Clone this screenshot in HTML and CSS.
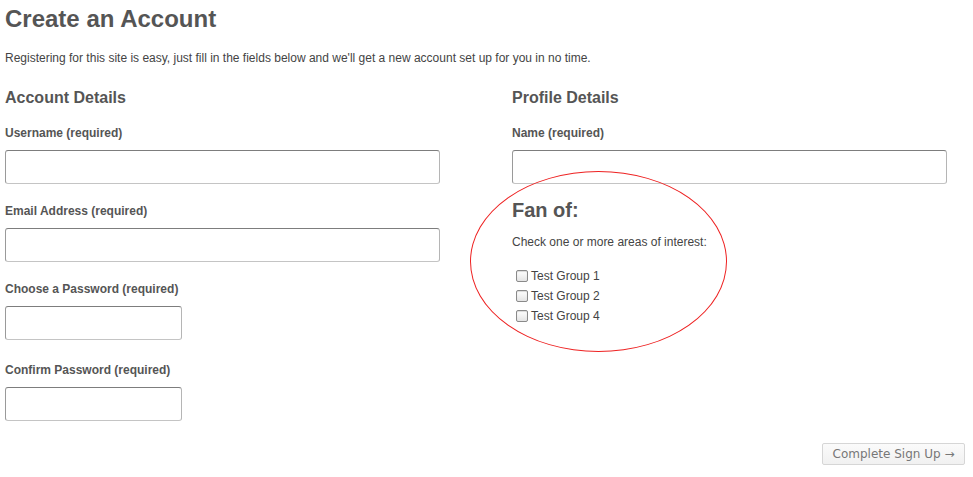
FILE: index.html
```html
<!DOCTYPE html>
<html>
<head>
<meta charset="utf-8">
<link rel="stylesheet" href="styles.css">
</head>
<body>
<div class="page">
  <h1 class="title">Create an Account</h1>
  <p class="intro">Registering for this site is easy, just fill in the fields below and we'll get a new account set up for you in no time.</p>
  <div class="columns">
    <section class="col">
      <h2 class="section-title">Account Details</h2>
      <div class="field">
        <label class="label">Username (required)</label>
        <input class="input wide" type="text">
      </div>
      <div class="field">
        <label class="label">Email Address (required)</label>
        <input class="input wide" type="text">
      </div>
      <div class="field">
        <label class="label">Choose a Password (required)</label>
        <input class="input short" type="password">
      </div>
      <div class="field field-loose">
        <label class="label">Confirm Password (required)</label>
        <input class="input short" type="password">
      </div>
    </section>
    <section class="col col-right">
      <h2 class="section-title">Profile Details</h2>
      <div class="field">
        <label class="label">Name (required)</label>
        <input class="input wide" type="text">
      </div>
      <h3 class="fan-title">Fan of:</h3>
      <p class="fan-help">Check one or more areas of interest:</p>
      <ul class="groups">
        <li class="group"><input class="check" type="checkbox"><span>Test Group 1</span></li>
        <li class="group"><input class="check" type="checkbox"><span>Test Group 2</span></li>
        <li class="group"><input class="check" type="checkbox"><span>Test Group 4</span></li>
      </ul>
      <div class="ring"></div>
    </section>
  </div>
  <div class="actions">
    <button class="submit" type="button">Complete Sign Up →</button>
  </div>
</div>
</body>
</html>
```

FILE: styles.css
```css
html, body {
  margin: 0;
  padding: 0;
  background: #ffffff;
}

body {
  font-family: "Liberation Sans", Arial, Helvetica, sans-serif;
  color: #555555;
}

.page {
  padding: 0 5px;
}

.title {
  margin: 5px 0 0;
  font-size: 24px;
  line-height: 28px;
  font-weight: bold;
  color: #555555;
}

.intro {
  margin: 17px 0 0;
  font-size: 12px;
  line-height: 16px;
  color: #444444;
}

.columns {
  display: grid;
  grid-template-columns: 435px 435px;
  column-gap: 72px;
  margin-top: 22px;
}

.col {
  position: relative;
}

.section-title {
  margin: 0;
  font-size: 16px;
  line-height: 20px;
  font-weight: bold;
  color: #555555;
}

.field {
  margin-top: 17px;
}

.field + .field {
  margin-top: 19px;
}

.field + .field-loose {
  margin-top: 22px;
}

.label {
  display: block;
  font-size: 12px;
  line-height: 16px;
  font-weight: bold;
  color: #555555;
  margin-bottom: 9px;
}

.input {
  display: block;
  box-sizing: border-box;
  height: 34px;
  margin: 0;
  padding: 4px 6px;
  border: 1px solid #c4c4c4;
  border-top-color: #7d7d7d;
  border-left-color: #9a9a9a;
  border-right-color: #b5b5b5;
  border-radius: 3px;
  background: #ffffff;
  font-family: inherit;
  font-size: 12px;
}

.wide {
  width: 435px;
}

.short {
  width: 177px;
}

.fan-title {
  margin: 14px 0 0;
  font-size: 20px;
  line-height: 24px;
  font-weight: bold;
  color: #555555;
}

.fan-help {
  margin: 12px 0 0;
  font-size: 12px;
  line-height: 16px;
  color: #444444;
}

.groups {
  list-style: none;
  margin: 16px 0 0;
  padding: 0;
}

.group {
  display: flex;
  align-items: center;
  height: 20px;
  font-size: 12px;
  color: #444444;
}

.check {
  -webkit-appearance: none;
  appearance: none;
  box-sizing: border-box;
  width: 12px;
  height: 12px;
  margin: 0 3px 0 4px;
  border: 1px solid #8a8a8a;
  border-radius: 2px;
  background: linear-gradient(#ffffff, #e4e4e4);
  box-shadow: inset 0 1px 1px rgba(0, 0, 0, 0.15);
}

.ring {
  position: absolute;
  left: -42px;
  top: 83px;
  width: 257px;
  height: 181px;
  box-sizing: border-box;
  border: 1px solid #ee2222;
  border-radius: 50%;
  pointer-events: none;
}

.actions {
  display: flex;
  justify-content: flex-end;
  margin-top: 22px;
  margin-right: 3px;
}

.submit {
  box-sizing: border-box;
  height: 22px;
  width: 143px;
  padding: 0;
  border: 1px solid #d6d6d6;
  border-radius: 2px;
  background: linear-gradient(#fbfbfb, #f1f1f1);
  font-family: "DejaVu Sans", "Lucida Grande", sans-serif;
  font-size: 12px;
  color: #777777;
}
```
